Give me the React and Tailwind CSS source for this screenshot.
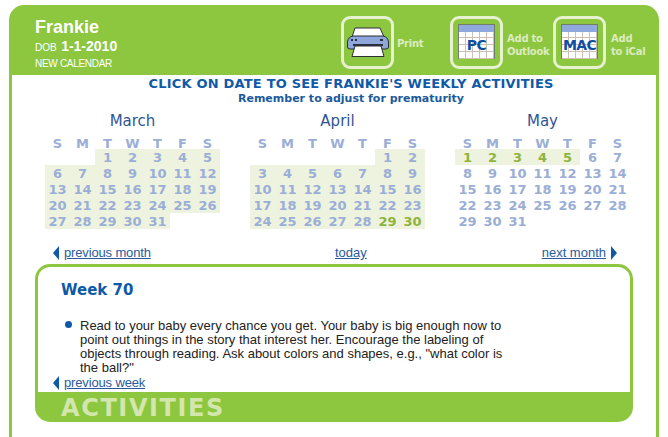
import React from "react";

const verdana = "font-['DejaVu_Sans','Verdana',sans-serif]";
const arial = "font-['Liberation_Sans',Arial,sans-serif]";

const DAYS = ["S", "M", "T", "W", "T", "F", "S"];

// first = blank cells before the 1st, shadeFrom/shadeTo = highlighted day range, greenFrom/greenTo = green numbers
const MONTHS = [
  { name: "March", first: 2, count: 31, shadeFrom: 1, shadeTo: 31 },
  { name: "April", first: 5, count: 30, shadeFrom: 1, shadeTo: 30, greenFrom: 29, greenTo: 30 },
  { name: "May", first: 0, count: 31, shadeFrom: 1, shadeTo: 5, greenFrom: 1, greenTo: 5 },
];

function Month({ m }) {
  const cells = [];
  for (let i = 0; i < m.first; i++) cells.push(<div key={`b${i}`} className="h-4" />);
  for (let d = 1; d <= m.count; d++) {
    const shaded = d >= m.shadeFrom && d <= m.shadeTo;
    const green = m.greenFrom && d >= m.greenFrom && d <= m.greenTo;
    cells.push(
      <div key={d} className={`h-4 pt-[2px] flex items-center justify-center ${shaded ? "bg-[#edf3df]" : ""} ${green ? "text-[#8fb33c]" : "text-[#9aaed6]"}`}>
        {d}
      </div>
    );
  }
  return (
    <div className="w-[175px]">
      <div className={`${verdana} font-normal text-[15px] leading-[20px] text-center text-[#2f5597] h-[21px]`}>{m.name}</div>
      <div className="grid grid-cols-7 text-[#9aaed6] h-[17px] pt-[2px]">
        {DAYS.map((d, i) => <div key={i} className="flex items-center justify-center">{d}</div>)}
      </div>
      <div className="grid grid-cols-7">{cells}</div>
    </div>
  );
}

function CalendarIcon({ label }) {
  const xs = [7, 14, 21, 28, 35];
  const ys = [13, 20, 27, 34];
  return (
    <div className="relative w-[37px] h-[35px] -mt-[2px]">
      <svg width="37" height="35" viewBox="0 0 37 35">
        <rect x="0.5" y="0.5" width="36" height="34" fill="#fff" stroke="#6f7f6a" />
        <rect x="1" y="1" width="35" height="7" fill="#8fa9dc" />
        {xs.map((x) => <line key={x} x1={x + 0.5} y1="8" x2={x + 0.5} y2="34" stroke="#cdbfb4" />)}
        {ys.map((y) => <line key={y} x1="1" y1={y + 0.5} x2="36" y2={y + 0.5} stroke="#cdbfb4" />)}
      </svg>
      <span className={`${verdana} absolute inset-x-0 top-[12px] text-center font-bold text-[#0f4fa0] text-[14px] leading-[18px] tracking-[-0.6px]`}>{label}</span>
    </div>
  );
}

function PrinterIcon() {
  return (
    <svg width="42" height="30" viewBox="0 0 42 30" className="-mt-[1px]">
      <path d="M5 10 L8 1 H33 L37 10 Z" fill="#fff" stroke="#2b2f3a" />
      <path d="M6 9 H36 Q41 10 41.5 15 V20 Q41.5 22 39 22 H3 Q0.5 22 0.5 20 V15 Q1 10 6 9 Z" fill="#8ea6da" stroke="#2b2f3a" />
      <rect x="4" y="12" width="2" height="2" fill="#2b2f3a" />
      <rect x="8" y="12" width="2" height="2" fill="#2b2f3a" />
      <rect x="33" y="12" width="3" height="2" fill="#2b2f3a" />
      <rect x="6" y="17" width="30" height="2" fill="#2b2f3a" />
      <path d="M8 19 H34 L37 29.5 H5 Z" fill="#fff" stroke="#2b2f3a" />
    </svg>
  );
}

function IconBox({ children }) {
  return (
    <div className="w-[53px] h-[53px] shrink-0 border-[3px] border-[#e6f1cf] rounded-[9px] flex items-center justify-center">
      {children}
    </div>
  );
}

function Arrow({ right }) {
  return (
    <svg width="6" height="14" viewBox="0 0 6 14" className="shrink-0">
      <path d={right ? "M0 0 L6 7 L0 14 Z" : "M6 0 L0 7 L6 14 Z"} fill="#0f5aa8" />
    </svg>
  );
}

const linkCls = `${arial} text-[#2a5a9c] underline text-[13px] leading-4`;

export default function App() {
  return (
    <div className="w-[668px] h-[437px] overflow-hidden bg-white pt-[5px] px-[9px]">
      <div className="h-[432px] bg-[#8dc63f] rounded-t-[15px] flex flex-col">
        <div className="h-[70px] shrink-0 flex">
          <div className={`${arial} pl-[26px] pt-[12px] w-[332px] text-white`}>
            <div className="font-bold text-[18px] leading-[20px]">Frankie</div>
            <div className="leading-[18px] h-[20px]"><span className="text-[10px]">DOB</span> <span className="font-bold text-[14px]">1-1-2010</span></div>
            <div className="text-[10px] tracking-[-0.3px] leading-[14px]">NEW CALENDAR</div>
          </div>
          <div className={`${verdana} pt-[11px] flex text-[10px] leading-[13px] font-bold tracking-[-0.25px] text-[#dcecc0]`}>
            <IconBox><PrinterIcon /></IconBox>
            <div className="w-[56px] pl-[3px] pt-[21px]">Print</div>
            <IconBox><CalendarIcon label="PC" /></IconBox>
            <div className="w-[50px] pl-[4px] pt-[16px]">Add to<br />Outlook</div>
            <IconBox><CalendarIcon label="MAC" /></IconBox>
            <div className="pl-[5px] pt-[16px]">Add<br />to iCal</div>
          </div>
        </div>

        <div className="flex-1 mx-[3px] bg-white flex flex-col">
          <div className={`${verdana} pl-[34px] text-center font-bold text-[#0f5aa8]`}>
            <div className="text-[13px] tracking-[0.2px] leading-[16px] pt-[1px]">CLICK ON DATE TO SEE FRANKIE'S WEEKLY ACTIVITIES</div>
            <div className="text-[11px] leading-[14px] text-[#1c5a9c]">Remember to adjust for prematurity</div>
          </div>

          <div className={`${verdana} pl-[33px] pt-[5px] flex gap-[30px] text-[13px] font-bold`}>
            {MONTHS.map((m) => <Month key={m.name} m={m} />)}
          </div>

          <div className="mt-[16px] ml-[41px] mr-[39px] flex items-center h-4">
            <div className="flex items-center gap-[5px] w-[282px]"><Arrow /><a className={`${linkCls} tracking-[-0.15px]`}>previous month</a></div>
            <a className={linkCls}>today</a>
            <div className="flex-1 flex items-center justify-end gap-[5px]"><a className={linkCls}>next month</a><Arrow right /></div>
          </div>

          <div className="mt-[3px] ml-[23px] w-[598px] h-[158px] bg-[#8dc63f] rounded-[15px] p-[3px] pb-0 flex flex-col">
            <div className="h-[125px] shrink-0 bg-white rounded-t-[12px] pl-[15px]">
              <div className={`${verdana} font-bold text-[15px] leading-5 text-[#0f5aa8] pl-[8px] pt-[13px]`}>Week 70</div>
              <div className={`${arial} flex mt-[19px] pl-[12px] text-[13px] leading-[14px] text-[#222]`}>
                <span className="w-[7px] h-[7px] mt-[2px] rounded-full bg-[#0f5aa8] shrink-0" />
                <p className="ml-[8px] w-[432px]">Read to your baby every chance you get. Your baby is big enough now to point out things in the story that interest her. Encourage the labeling of objects through reading. Ask about colors and shapes, e.g., "what color is the ball?"</p>
              </div>
              <div className="flex items-center gap-[5px] h-4"><Arrow /><a className={`${linkCls} tracking-[-0.15px]`}>previous week</a></div>
            </div>
            <div className={`${verdana} pl-[23px] font-bold text-[24px] leading-[33px] tracking-[1.6px] text-[#d3e6ad]`}>ACTIVITIES</div>
          </div>
        </div>
      </div>
    </div>
  );
}
